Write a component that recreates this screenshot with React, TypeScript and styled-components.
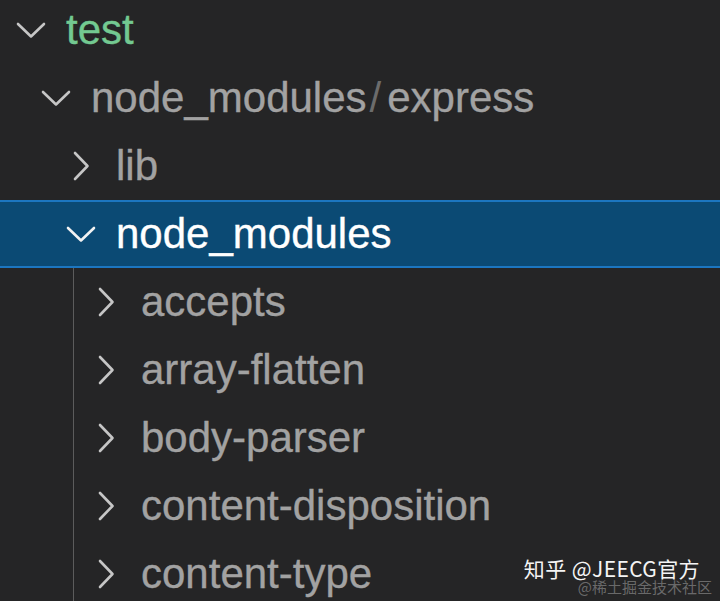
import React from "react";
import styled, { createGlobalStyle } from "styled-components";

type Tone = "added" | "normal" | "active";

interface Node {
  label: string;
  suffix?: string;
  level: number;
  open?: boolean;
  tone?: Tone;
  selected?: boolean;
}

const topNodes: Node[] = [
  { label: "test", level: 0, open: true, tone: "added" },
  { label: "node_modules", suffix: "express", level: 1, open: true },
  { label: "lib", level: 2 },
  { label: "node_modules", level: 2, open: true, selected: true },
];

const packages = [
  "accepts",
  "array-flatten",
  "body-parser",
  "content-disposition",
  "content-type",
];

const GlobalStyle = createGlobalStyle`
  html, body {
    margin: 0;
    padding: 0;
    background: #252526;
  }
  body {
    font-family: "Liberation Sans", Arial, sans-serif;
  }
`;

const Page = styled.div`
  position: relative;
  width: 720px;
  height: 601px;
  overflow: hidden;
  background: #252526;
`;

const Tree = styled.div`
  margin-top: -4px;
  display: flex;
  flex-direction: column;
`;

const Group = styled.div`
  display: flex;
  flex-direction: column;
  background: linear-gradient(#5c5c5c, #5c5c5c) no-repeat 73px 0 / 1px 100%;
`;

const Row = styled.div<{ $level: number; $selected?: boolean }>`
  display: flex;
  align-items: center;
  flex: none;
  height: 68px;
  box-sizing: border-box;
  padding-left: ${(p) => 8 + 25 * p.$level}px;
  background: ${(p) => (p.$selected ? "#0b4a74" : "transparent")};
  border-top: 2px solid ${(p) => (p.$selected ? "#1c76c0" : "transparent")};
  border-bottom: 2px solid ${(p) => (p.$selected ? "#1c76c0" : "transparent")};
`;

const Twistie = styled.span<{ $active?: boolean }>`
  width: 46px;
  flex: none;
  display: flex;
  align-items: center;
  justify-content: center;
  color: ${(p) => (p.$active ? "#f2f2f2" : "#c6c6c6")};
`;

const toneColor: Record<Tone, string> = {
  added: "#73c991",
  normal: "#a2a2a2",
  active: "#ffffff",
};

const Label = styled.span<{ $tone: Tone }>`
  margin-left: 12px;
  font-size: 42px;
  white-space: nowrap;
  color: ${(p) => toneColor[p.$tone]};
  -webkit-text-stroke: 0.35px currentColor;
`;

const Separator = styled.span`
  margin: 0 6px 0 3px;
  color: #6c6c6c;
  -webkit-text-stroke: 0;
`;

const Watermark = styled.div`
  position: absolute;
  right: 8px;
  bottom: 6px;
  display: flex;
  flex-direction: column;
  align-items: flex-end;
  font-family: "Noto Sans CJK SC", "Liberation Sans", sans-serif;
`;

const Brand = styled.span`
  margin-right: 12px;
  font-size: 21px;
  line-height: 22px;
  letter-spacing: 0.4px;
  color: #f4f4f4;
`;

const Source = styled.span`
  font-size: 15px;
  line-height: 16px;
  color: rgba(255, 255, 255, 0.32);
`;

const Chevron = ({ open }: { open?: boolean }) =>
  open ? (
    <svg width="30" height="17" viewBox="0 0 30 17" fill="none">
      <path d="M2 2 L15 14.5 L28 2" stroke="currentColor" strokeWidth="2.6" strokeLinecap="round" strokeLinejoin="round" />
    </svg>
  ) : (
    <svg width="17" height="30" viewBox="0 0 17 30" fill="none">
      <path d="M2 2 L14.5 15 L2 28" stroke="currentColor" strokeWidth="2.6" strokeLinecap="round" strokeLinejoin="round" />
    </svg>
  );

const TreeRow = ({ node }: { node: Node }) => {
  const tone: Tone = node.selected ? "active" : node.tone ?? "normal";
  return (
    <Row $level={node.level} $selected={node.selected}>
      <Twistie $active={node.selected}>
        <Chevron open={node.open} />
      </Twistie>
      <Label $tone={tone}>
        {node.label}
        {node.suffix && (
          <>
            <Separator>/</Separator>
            {node.suffix}
          </>
        )}
      </Label>
    </Row>
  );
};

export default function App() {
  return (
    <Page>
      <GlobalStyle />
      <Tree>
        {topNodes.map((node, i) => (
          <TreeRow key={i} node={node} />
        ))}
        <Group>
          {packages.map((name) => (
            <TreeRow key={name} node={{ label: name, level: 3 }} />
          ))}
        </Group>
      </Tree>
      <Watermark>
        <Brand>知乎 @JEECG官方</Brand>
        <Source>@稀土掘金技术社区</Source>
      </Watermark>
    </Page>
  );
}
